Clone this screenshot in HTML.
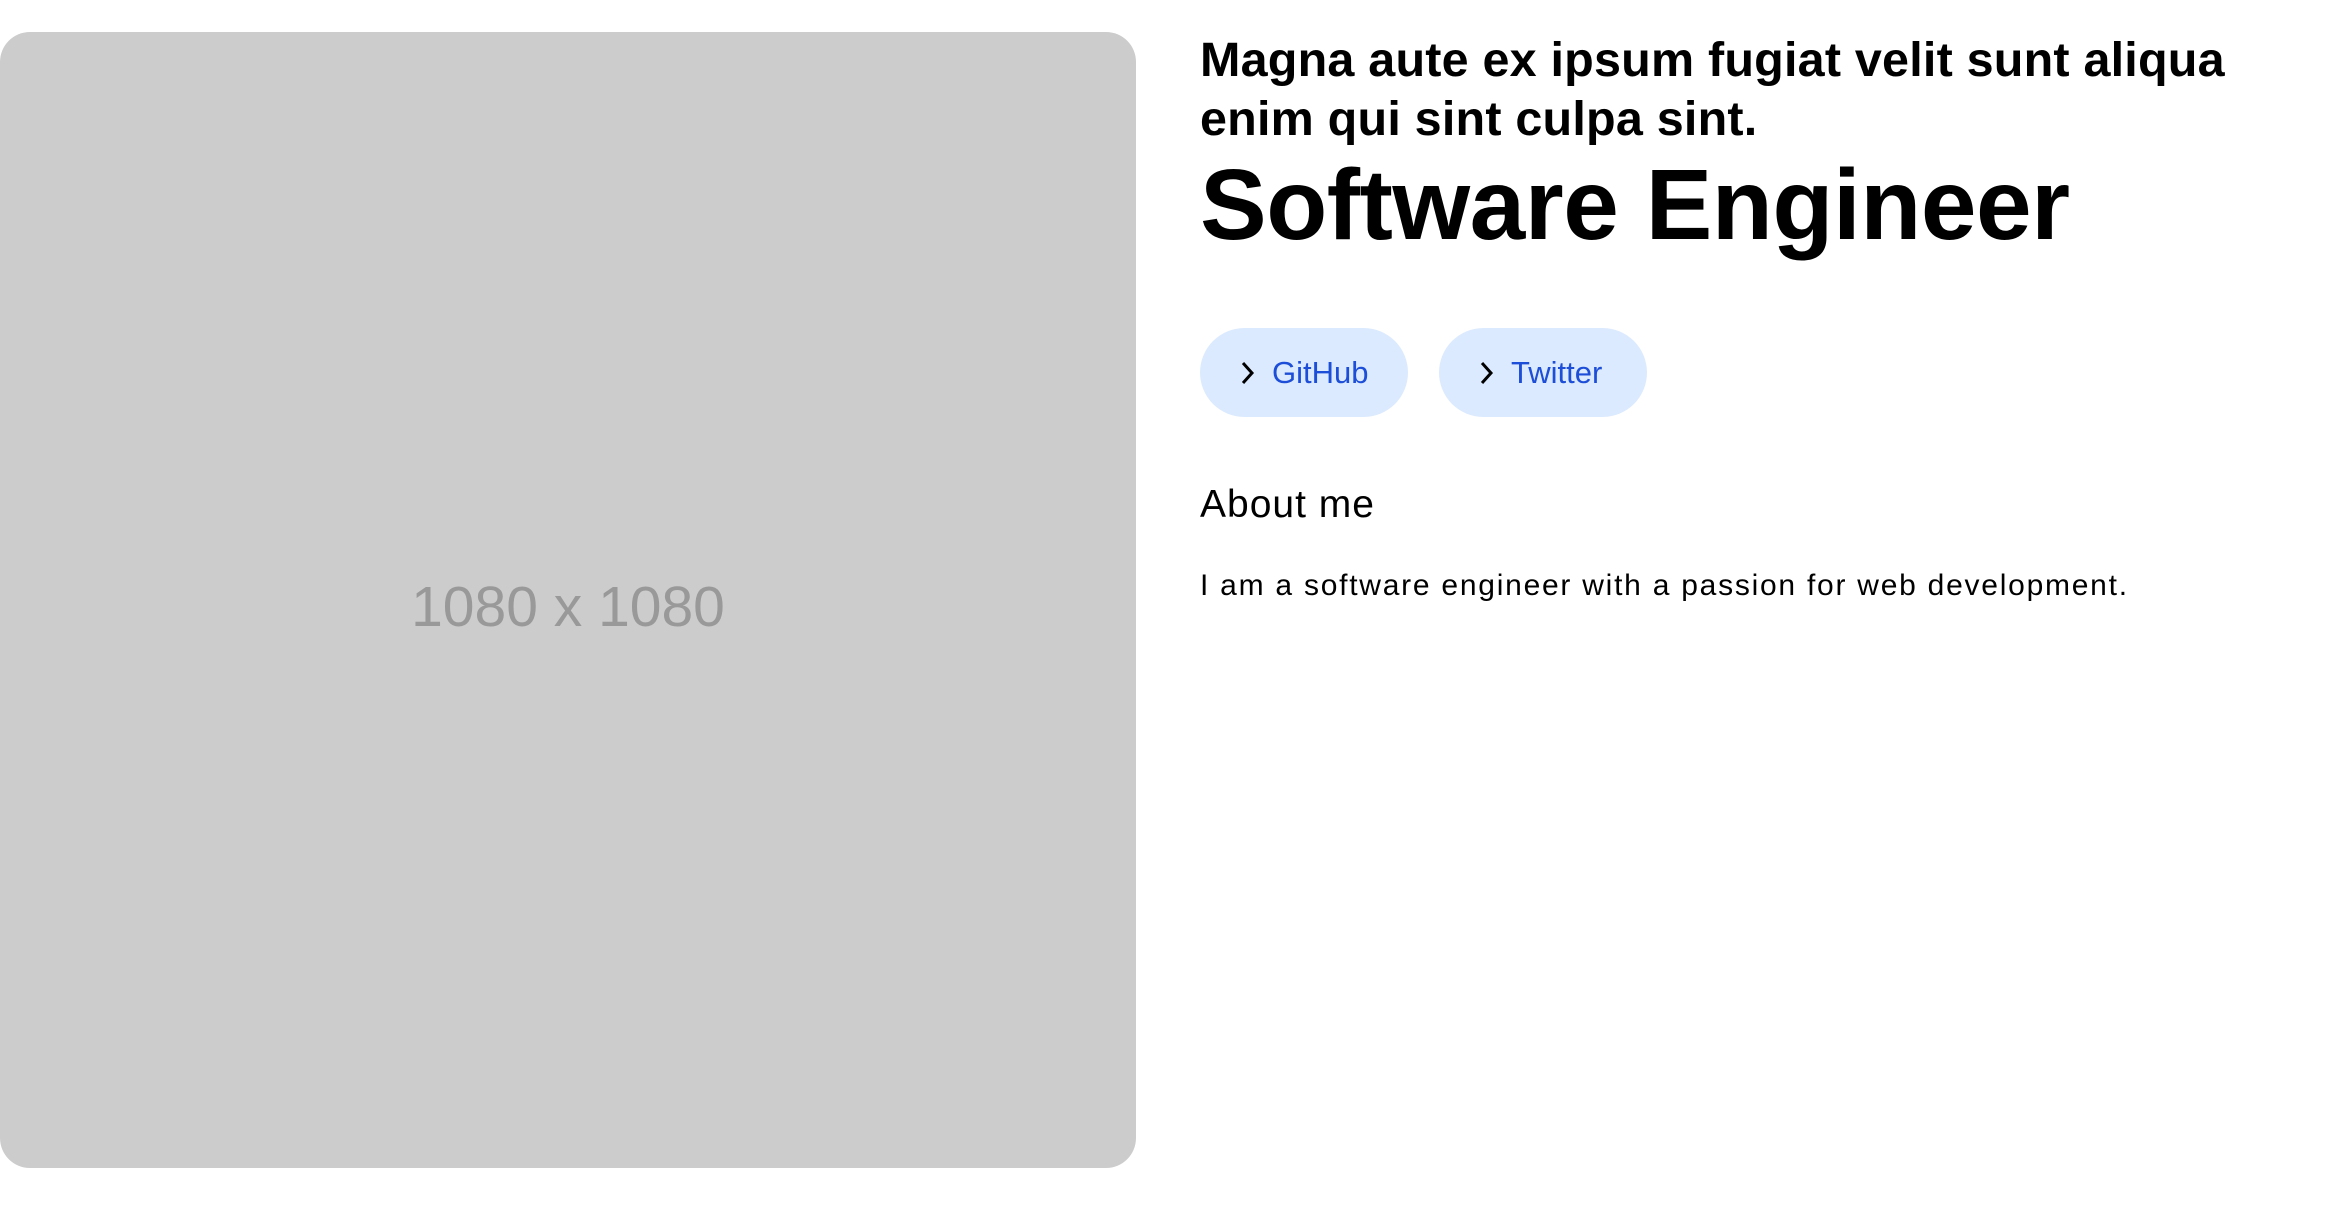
<!DOCTYPE html>
<html><head><meta charset="utf-8"><style>
body{margin:0;width:2336px;height:1208px;background:#fff;font-family:"Liberation Sans",sans-serif;position:relative;overflow:hidden}
.img{position:absolute;left:0;top:32px;width:1136px;height:1136px;background:#cccccc;border-radius:30px}
.img span{position:absolute;left:0;right:0;top:545px;text-align:center;font-size:57px;color:#999;line-height:60px}
.t{position:absolute;left:1200px;white-space:nowrap;color:#000}
.h1{top:31px;font-size:48.5px;font-weight:bold;line-height:59px;letter-spacing:0.2px}
.h2{top:150px;font-size:100px;font-weight:bold;line-height:110px;letter-spacing:-0.5px}
.btn{position:absolute;top:328px;height:89px;width:208px;border-radius:45px;background:#dbeafe;color:#1d4ed8;font-size:31px;line-height:89px}
.btn svg{position:absolute;left:40px;top:32px}
.btn b{font-weight:normal;position:absolute;left:72px}
.about{top:480px;font-size:39px;line-height:50px;letter-spacing:1px}
.p{top:566px;font-size:30px;line-height:40px;letter-spacing:1.75px}
</style></head><body>
<div class="img"><span>1080 x 1080</span></div>
<div class="t h1">Magna aute ex ipsum fugiat velit sunt aliqua<br>enim qui sint culpa sint.</div>
<div class="t h2">Software Engineer</div>
<div class="btn" style="left:1200px"><svg width="16" height="26" viewBox="0 0 16 26"><path d="M3 3 L12 13 L3 23" fill="none" stroke="#000" stroke-width="3"/></svg><b>GitHub</b></div>
<div class="btn" style="left:1439px"><svg width="16" height="26" viewBox="0 0 16 26"><path d="M3 3 L12 13 L3 23" fill="none" stroke="#000" stroke-width="3"/></svg><b>Twitter</b></div>
<div class="t about">About me</div>
<div class="t p">I am a software engineer with a passion for web development.</div>
</body></html>
